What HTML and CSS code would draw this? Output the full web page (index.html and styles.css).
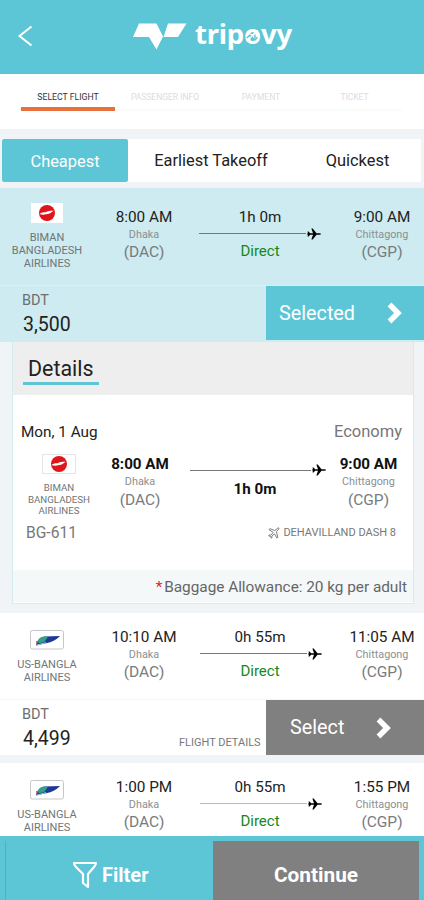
FILE: index.html
```html
<!DOCTYPE html>
<html lang="en">
<head>
<meta charset="utf-8">
<meta name="viewport" content="width=device-width, initial-scale=1">
<title>tripovy – Select flight</title>
<link rel="stylesheet" href="styles.css">
</head>
<body>
<svg class="defs" aria-hidden="true">
  <symbol id="plane" viewBox="0 0 14 14"><path d="M0 6.500h1l-.5-2h1l1.700 1.800H6L4.400 1.500h1.300l3.800 4.800h3q1.500.2 1.500.7t-1.500.7h-3l-3.800 4.800H4.400L6 7.700H3.200L1.500 9.500h-1l.5-2H0z"/></symbol>
  <symbol id="chevron" viewBox="0 0 16 22"><path d="M3.500 2.500 12 11 3.500 19.500" fill="none" stroke="#fff" stroke-width="5.400"/></symbol>
  <symbol id="biman" viewBox="0 0 32 20"><path d="M0 0h32v20H0z" fill="#fff"/><circle cx="16" cy="10" r="8" fill="#e0141b"/><path d="M8.500 11c3-2.800 5.500-.8 7.500-2.500 2.500-1 5-.5 7-1-2.500 1.200-2.500 2.500-5 3.200-3 .3-5 1.800-9.500.3z" fill="#fff"/></symbol>
  <symbol id="usbangla" viewBox="0 0 34 20"><rect x=".5" y=".5" width="33" height="18.500" rx="2" fill="#fff" stroke="#c4c7c9"/><path d="M6 15.500c1.500-6 4-8.500 8.500-9l15.500-.5c-4 4-8 6-14 7.200z" fill="#1f3799"/><path d="M7.500 12c1.500-3.800 4-5.200 8-5.400l2.500.2-3.500 5-5 1.500z" fill="#34a384"/><path d="M6 11l2.500.5-1.800 3z" fill="#dc3a43"/><path d="M7 15l9-2.400" stroke="#8ccbe8" fill="none"/></symbol>
</svg>
<div class="app">
  <header class="header">
    <svg class="back" viewBox="0 0 16 22"><path d="M14.500 1.500 2.500 11l12 9.500" fill="none" stroke="#fff" stroke-width="2"/></svg>
    <svg class="mark" viewBox="0 0 56 30"><path d="M7 2.500h17.500l6.500 13-6.500 13L17 16H1zM36 2.500h18.500L46 16H31.500z" fill="#fff"/></svg>
    <div class="brand">trip<span class="o">o<svg viewBox="0 0 16 16"><path d="M0 15 7 8 4 6h4l6-5 1 1-5 6v4L8 9l-5 6z" fill="#fff"/><path d="M1 11 5 7M11 14l3-4" stroke="#5cc6d6" stroke-width="1.800"/></svg></span>vy</div>
  </header>
  <nav class="steps">
    <span class="step active">SELECT FLIGHT</span><span class="step">PASSENGER INFO</span><span class="step">PAYMENT</span><span class="step">TICKET</span>
  </nav>
  <div class="tabs"><span class="tab on">Cheapest</span><span class="tab early">Earliest Takeoff</span><span class="tab quick">Quickest</span></div>
  <section class="flight chosen">
    <div class="route">
      <div class="airline"><svg class="logo"><use href="#biman"/></svg><span>BIMAN<br>BANGLADESH<br>AIRLINES</span></div>
      <div class="stop"><b>8:00 AM</b><i>Dhaka</i><em>(DAC)</em></div>
      <div class="path"><span class="dur">1h 0m</span><div class="line"><svg><use href="#plane"/></svg></div><span class="direct">Direct</span></div>
      <div class="stop"><b>9:00 AM</b><i>Chittagong</i><em>(CGP)</em></div>
    </div>
    <div class="fare"><div class="price"><span>BDT</span><strong>3,500</strong></div><div class="pick">Selected<svg><use href="#chevron"/></svg></div></div>
  </section>
  <section class="details">
    <div class="dhead"><h2>Details</h2></div>
    <div class="dmeta"><span class="date">Mon, 1 Aug</span><span class="cabin">Economy</span></div>
    <div class="route">
      <div class="airline"><svg class="logo"><use href="#biman"/></svg><span>BIMAN<br>BANGLADESH<br>AIRLINES</span></div>
      <div class="stop"><b>8:00 AM</b><i>Dhaka</i><em>(DAC)</em></div>
      <div class="path"><div class="line"><svg><use href="#plane"/></svg></div><span class="dur">1h 0m</span></div>
      <div class="stop"><b>9:00 AM</b><i>Chittagong</i><em>(CGP)</em></div>
    </div>
    <div class="craft"><span class="code">BG-611</span><span class="model"><svg viewBox="0 0 14 14"><path d="M1 3 2.500 2 8 4.200 11.500 1.200q1.500-.7 1.200.8L9.800 5.500 11.500 12l-1.200.8L7.500 8 4.500 10.500l.2 2-1 .5L3 11 .8 10.300l.5-1 2 .2L6 6.300z" fill="none" stroke="#777" stroke-width="1.100"/></svg>DEHAVILLAND DASH 8</span></div>
    <div class="bag"><span class="star">*</span>Baggage Allowance: 20 kg per adult</div>
  </section>
  <section class="flight second">
    <div class="route">
      <div class="airline"><svg class="logo"><use href="#usbangla"/></svg><span>US-BANGLA<br>AIRLINES</span></div>
      <div class="stop"><b>10:10 AM</b><i>Dhaka</i><em>(DAC)</em></div>
      <div class="path"><span class="dur">0h 55m</span><div class="line"><svg><use href="#plane"/></svg></div><span class="direct">Direct</span></div>
      <div class="stop"><b>11:05 AM</b><i>Chittagong</i><em>(CGP)</em></div>
    </div>
    <div class="fare"><div class="price"><span>BDT</span><strong>4,499</strong></div><span class="more">FLIGHT DETAILS</span><div class="pick">Select<svg><use href="#chevron"/></svg></div></div>
  </section>
  <section class="flight third">
    <div class="route">
      <div class="airline"><svg class="logo"><use href="#usbangla"/></svg><span>US-BANGLA<br>AIRLINES</span></div>
      <div class="stop"><b>1:00 PM</b><i>Dhaka</i><em>(DAC)</em></div>
      <div class="path"><span class="dur">0h 55m</span><div class="line"><svg><use href="#plane"/></svg></div><span class="direct">Direct</span></div>
      <div class="stop"><b>1:55 PM</b><i>Chittagong</i><em>(CGP)</em></div>
    </div>
  </section>
  <footer class="footer">
    <div class="filter"><svg viewBox="0 0 26 28"><path d="M2 2h22q0 2-2 4l-6 7v13l-5-4v-9L4 6Q2 4 2 2z" fill="none" stroke="#fff" stroke-width="2.200" stroke-linejoin="round"/></svg>Filter</div>
    <div class="continue">Continue</div>
  </footer>
</div>
</body>
</html>
```
FILE: styles.css
```css
* { box-sizing: border-box; }
body { margin: 0; font-family: Roboto, "Liberation Sans", sans-serif; color: #222; background: #f1f4f6; }
.defs { display: none; }
.app { width: 424px; height: 900px; overflow: hidden; display: flex; flex-direction: column; white-space: nowrap; }
.app > * { flex: none; }

.header { height: 74px; background: #5cc6d6; display: flex; align-items: flex-start; color: #fff; }
.back { width: 16px; height: 22px; margin: 25px 0 0 17px; }
.mark { width: 56px; height: 30px; margin: 21px 0 0 99px; }
.brand { margin: 16px 0 0 7px; font: 700 27.500px/36px "Noto Sans", sans-serif; letter-spacing: -0.200px; }
.o { position: relative; }
.o svg { position: absolute; left: 2px; top: 14px; width: 13px; height: 13px; }

.steps { height: 55px; background: #fff; padding: 0 21px; display: grid; grid-template-columns: 94px 100px 92px 95px; align-items: start; }
.step { height: 37px; padding-top: 16px; text-align: center; font-size: 8.500px; line-height: 14px; color: #dcdcde; border-bottom: 2px solid #fafbfb; }
.step.active { color: #333; border-bottom: 4px solid #e8703c; font-size: 8.700px; }

.tabs { height: 43px; margin: 10px 3px 6px 2px; background: #fff; display: flex; align-items: center; font-size: 16.400px; color: #222; }
.tab { line-height: 45px; text-align: center; }
.tab.on { width: 126px; height: 43px; background: #5cc6d6; color: #fff; border-radius: 2px; }
.early { width: 166px; }
.quick { width: 127px; }

.flight { background: #fff; }
.route { display: grid; grid-template-columns: 94px 100px 132px 112px; }
.airline { display: flex; flex-direction: column; align-items: center; text-align: center; font-size: 11px; line-height: 13px; color: #707577; padding-top: 15px; }
.logo { width: 34px; height: 20px; margin-bottom: 8px; }
.stop { display: flex; flex-direction: column; align-items: center; padding-top: 19px; }
.stop b { font-size: 15.300px; font-weight: 400; line-height: 20px; }
.stop i { font-size: 10.800px; font-style: normal; line-height: 15px; color: #8b8f91; }
.stop em { font-size: 15.500px; font-style: normal; line-height: 21px; color: #777c7e; }
.path { display: flex; flex-direction: column; align-items: center; padding-top: 19px; }
.dur { font-size: 15.200px; line-height: 20px; }
.line { width: 122px; height: 13px; display: flex; align-items: center; }
.line::before { content: ""; flex: 1; height: 1px; background: #777; }
.line svg { width: 14px; height: 14px; margin-left: 1px; }
.direct { font-size: 15px; line-height: 22px; color: #15881c; }
.fare { height: 56px; display: flex; }
.price { width: 179px; padding: 5px 0 0 22px; display: flex; flex-direction: column; }
.price span { font-size: 14.500px; line-height: 18px; color: #6b6f71; }
.price strong { font-size: 19.500px; line-height: 29px; font-weight: 400; padding-left: 1px; }
.pick { width: 158px; height: 54px; margin-left: auto; color: #fff; font-size: 19.800px; display: flex; align-items: center; background: #5cc6d6; padding-left: 13px; }
.pick svg { width: 16px; height: 22px; margin-left: 31px; }
.more { font-size: 11px; color: #777; margin-top: 35px; line-height: 16px; }

.chosen { background: #cdebf0; height: 154px; }
.chosen .route { height: 97px; }
.chosen .fare { border-top: 1px solid #daf0f3; height: 57px; }
.chosen .price { padding-top: 6px; }

.details { width: 402px; height: 262px; margin-left: 12px; background: #fff; border: 1px solid #d3ecee; border-top: 0; }
.dhead { height: 53px; background: #eee; padding: 13px 0 0 10px; }
h2 { display: inline-block; width: 76px; margin: 0; padding-left: 5px; font-size: 21.400px; line-height: 28px; height: 30px; font-weight: 400; border-bottom: 3px solid #5cc6d6; }
.dmeta { display: flex; justify-content: space-between; padding: 26px 11px 0 8px; line-height: 22px; }
.date { font-size: 15.300px; }
.cabin { font-size: 16.500px; color: #777; }
.details .route { grid-template-columns: 92px 70px 164px 59px; height: 80px; }
.details .airline { padding-top: 11px; font-size: 9.700px; line-height: 11.500px; }
.details .logo { margin-bottom: 8px; outline: 1px solid #e5e5e5; outline-offset: -1px; }
.details .stop { padding-top: 11px; }
.details .stop i { line-height: 16px; }
.details .stop b, .details .dur { font-weight: 700; font-size: 15.200px; color: #111; }
.details .path { padding-top: 20px; }
.details .line { width: 136px; height: 14px; margin-left: 2px; }
.details .dur { margin: 2px 4px 0 0; }
.craft { display: flex; justify-content: space-between; padding: 0 17px 0 13px; line-height: 20px; color: #777; }
.code { font-size: 15.600px; }
.model { font-size: 11px; display: flex; align-items: center; }
.model svg { width: 12px; height: 12px; margin-right: 3px; }
.bag { height: 32px; margin-top: 27px; background: #f5f8f9; text-align: right; padding-right: 6px; font-size: 15.400px; letter-spacing: -.04px; line-height: 35px; color: #666; }
.star { color: #d22; margin-right: 2px; }

.second { margin-top: 9px; height: 142px; }
.second .route, .third .route { height: 86px; }
.second .stop, .second .path { padding-top: 14px; }
.second .airline, .third .airline { padding-top: 17px; }
.second .airline span, .third .airline span { padding-top: 0; }
.second .line, .third .line { margin-left: 1px; }
.second .fare { border-top: 1px solid #f2f4f5; }
.second .price { padding-top: 6px; }
.second .pick { background: #808080; height: 55px; padding-left: 24px; }
.third { margin-top: 8px; height: 73px; overflow: hidden; }
.third .stop, .third .path { padding-top: 14px; }
.third .line::before { background: #bbb; }

.footer { height: 64px; background: #5cc6d6; display: flex; color: #fff; font-size: 20px; font-weight: 700; padding: 5px 5px 0; }
.filter { flex: 1; border-left: 1px solid #4fb2c1; display: flex; align-items: center; padding: 9px 0 0 66px; }
.filter svg { width: 26px; height: 28px; margin-right: 4px; }
.continue { width: 206px; background: #808080; text-align: center; font-size: 20.800px; line-height: 68px; }
```
